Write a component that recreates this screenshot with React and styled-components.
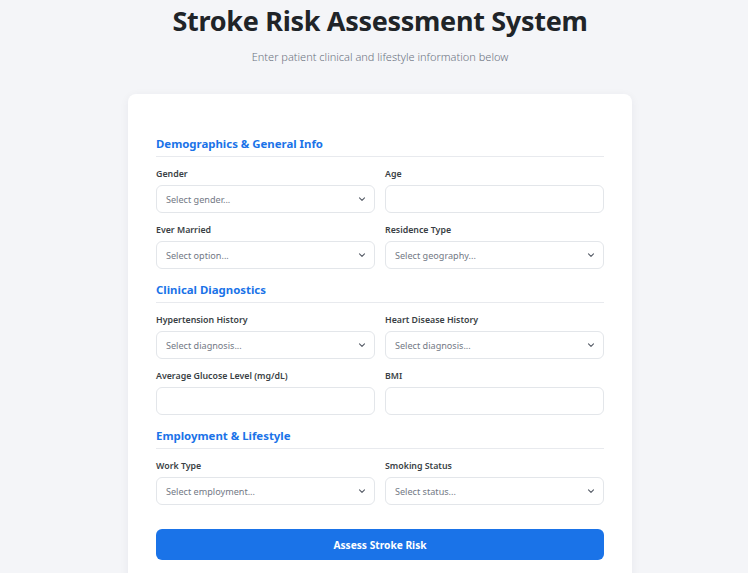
import styled, { createGlobalStyle } from "styled-components";

const GlobalStyle = createGlobalStyle`
  * { box-sizing: border-box; }
  body {
    margin: 0;
    background: #f4f5f8;
    font-family: "Noto Sans", "Open Sans", sans-serif;
    color: #1f2328;
    overflow-x: hidden;
  }
`;

const Page = styled.main`
  width: 760px;
  min-height: 573px;
  display: flex;
  flex-direction: column;
  align-items: center;
`;

const Title = styled.h1`
  margin: 0;
  font-size: 27px;
  line-height: 42px;
  font-weight: 700;
  letter-spacing: -0.3px;
  color: #202428;
  text-align: center;
`;

const Subtitle = styled.p`
  margin: 7px 0 0;
  font-size: 11px;
  line-height: 16px;
  font-weight: 300;
  color: #6b7280;
  text-align: center;
`;

const Card = styled.form`
  width: 504px;
  margin-top: 29px;
  background: #fff;
  border-radius: 8px;
  box-shadow: 0 2px 10px rgba(30, 40, 60, 0.06);
  padding: 41px 28px 24px;
`;

const Section = styled.section`
  & + & { margin-top: 12px; }
`;

const SectionTitle = styled.h2`
  margin: 0;
  font-size: 11.4px;
  line-height: 18px;
  font-weight: 700;
  color: #1a73e8;
  padding-bottom: 3px;
  border-bottom: 1px solid #e8eaee;
`;

const Grid = styled.div`
  display: grid;
  grid-template-columns: 1fr 1fr;
  column-gap: 10px;
  row-gap: 10px;
  margin-top: 10px;
`;

const Field = styled.label`
  display: flex;
  flex-direction: column;
`;

const Label = styled.span`
  font-size: 8.8px;
  line-height: 14px;
  font-weight: 600;
  color: #3a3f45;
  margin-bottom: 4px;
`;

const boxStyles = `
  width: 100%;
  height: 28px;
  border: 1px solid #e3e6ea;
  border-radius: 6px;
  background: #fff;
  font-family: inherit;
  font-size: 9.1px;
  color: #737985;
  padding: 0 9px;
  outline: none;
`;

const Input = styled.input`
  ${boxStyles}
`;

const SelectWrap = styled.div`
  position: relative;
`;

const Select = styled.select`
  ${boxStyles}
  appearance: none;
  cursor: pointer;
`;

const Chevron = styled.svg`
  position: absolute;
  right: 9px;
  top: 11px;
  width: 8px;
  height: 6px;
  pointer-events: none;
`;

const SubmitButton = styled.button`
  display: block;
  width: 100%;
  height: 31px;
  margin-top: 24px;
  border: none;
  border-radius: 6px;
  background: #1a73e8;
  color: #fff;
  font-family: inherit;
  font-size: 10.2px;
  font-weight: 700;
  cursor: pointer;
`;

function SelectField({ label, placeholder }) {
  return (
    <Field>
      <Label>{label}</Label>
      <SelectWrap>
        <Select defaultValue="">
          <option value="" disabled>{placeholder}</option>
        </Select>
        <Chevron viewBox="0 0 8 6" fill="none">
          <path d="M1.5 1.8l2.5 2.5 2.5-2.5" stroke="#555b66" strokeWidth="1.1" strokeLinecap="round" strokeLinejoin="round" />
        </Chevron>
      </SelectWrap>
    </Field>
  );
}

function InputField({ label }) {
  return (
    <Field>
      <Label>{label}</Label>
      <Input type="text" />
    </Field>
  );
}

export default function App() {
  return (
    <>
      <GlobalStyle />
      <Page>
        <Title>Stroke Risk Assessment System</Title>
        <Subtitle>Enter patient clinical and lifestyle information below</Subtitle>
        <Card onSubmit={(e) => e.preventDefault()}>
          <Section>
            <SectionTitle>Demographics &amp; General Info</SectionTitle>
            <Grid>
              <SelectField label="Gender" placeholder="Select gender..." />
              <InputField label="Age" />
              <SelectField label="Ever Married" placeholder="Select option..." />
              <SelectField label="Residence Type" placeholder="Select geography..." />
            </Grid>
          </Section>
          <Section>
            <SectionTitle>Clinical Diagnostics</SectionTitle>
            <Grid>
              <SelectField label="Hypertension History" placeholder="Select diagnosis..." />
              <SelectField label="Heart Disease History" placeholder="Select diagnosis..." />
              <InputField label="Average Glucose Level (mg/dL)" />
              <InputField label="BMI" />
            </Grid>
          </Section>
          <Section>
            <SectionTitle>Employment &amp; Lifestyle</SectionTitle>
            <Grid>
              <SelectField label="Work Type" placeholder="Select employment..." />
              <SelectField label="Smoking Status" placeholder="Select status..." />
            </Grid>
          </Section>
          <SubmitButton type="submit">Assess Stroke Risk</SubmitButton>
        </Card>
      </Page>
    </>
  );
}
